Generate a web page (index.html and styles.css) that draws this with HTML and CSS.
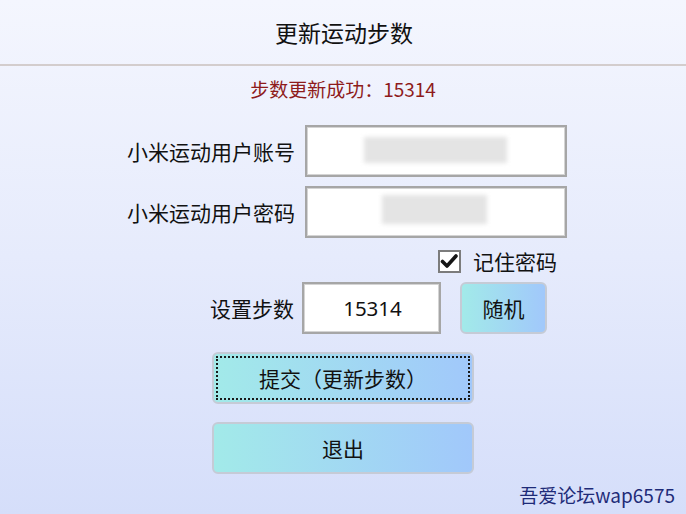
FILE: index.html
```html
<!DOCTYPE html>
<html lang="zh">
<head>
<meta charset="utf-8">
<title>更新运动步数</title>
<link rel="stylesheet" href="styles.css">
</head>
<body>
<div class="page">
  <div class="header">更新运动步数</div>
  <div class="msg">步数更新成功：15314</div>
  <div class="row row-account">
    <div class="label">小米运动用户账号</div>
    <div class="field field-wide"><div class="blur blur-a"></div></div>
  </div>
  <div class="row row-password">
    <div class="label">小米运动用户密码</div>
    <div class="field field-wide"><div class="blur blur-b"></div></div>
  </div>
  <div class="row row-remember">
    <div class="checkbox">
      <svg viewBox="0 0 19 19" width="19" height="19"><path d="M2.5 9.5 L7 14 L16 4" fill="none" stroke="#151515" stroke-width="3.6" stroke-linecap="round" stroke-linejoin="round"/></svg>
    </div>
    <div class="remember-text">记住密码</div>
  </div>
  <div class="row row-steps">
    <div class="label">设置步数</div>
    <div class="field field-steps">15314</div>
    <div class="btn btn-small">随机</div>
  </div>
  <div class="row row-btn row-submit">
    <div class="btn btn-wide"><div class="focus">提交（更新步数）</div></div>
  </div>
  <div class="row row-btn row-exit">
    <div class="btn btn-wide">退出</div>
  </div>
  <div class="footer">吾爱论坛wap6575</div>
</div>
</body>
</html>
```
FILE: styles.css
```css
html, body {
  margin: 0;
  padding: 0;
}
body {
  width: 686px;
  height: 514px;
  overflow: hidden;
  background: linear-gradient(to bottom, #f4f6fe 0%, #e6ebfc 50%, #d5defa 100%);
  font-family: "Noto Sans CJK SC", "Microsoft YaHei", sans-serif;
  color: #111;
}
.page {
  display: flex;
  flex-direction: column;
}
.header {
  height: 64px;
  border-bottom: 2px solid #d3cdcd;
  display: flex;
  align-items: center;
  justify-content: center;
  font-size: 23px;
  padding-left: 2px;
}
.msg {
  padding-top: 11px;
  line-height: 24px;
  height: 24px;
  text-align: center;
  color: #8e1b1b;
  font-size: 19px;
  padding-left: 0;
}
.row {
  display: flex;
  align-items: center;
}
.label {
  font-size: 21px;
  line-height: 24px;
  white-space: nowrap;
}
.field {
  box-sizing: border-box;
  height: 52px;
  background: #fff;
  border: 2px solid #a6a6a6;
  box-shadow: inset 0 0 0 1px #d4d4d4;
  display: flex;
  align-items: center;
  justify-content: center;
  position: relative;
}
.row-account {
  margin-top: 24px;
  padding-left: 127px;
}
.row-password {
  margin-top: 9px;
  padding-left: 127px;
}
.row-account .label, .row-password .label {
  width: 178px;
}
.field-wide {
  width: 262px;
}
.blur {
  position: absolute;
  background: #e4e4e4;
  filter: blur(2px);
}
.blur-a {
  left: 57px;
  top: 10px;
  width: 143px;
  height: 26px;
}
.blur-b {
  left: 75px;
  top: 7px;
  width: 105px;
  height: 29px;
}
.row-remember {
  margin-top: 12px;
  padding-left: 438px;
  height: 22px;
}
.checkbox {
  box-sizing: border-box;
  width: 23px;
  height: 23px;
  border: 2px solid #7c7c7c;
  background: #fff;
  display: flex;
  align-items: center;
  justify-content: center;
}
.checkbox svg {
  display: block;
  width: 19px;
  height: 19px;
}
.remember-text {
  margin-left: 12px;
  font-size: 21px;
  line-height: 24px;
}
.row-steps {
  margin-top: 10px;
  padding-left: 210px;
}
.row-steps .label {
  width: 92px;
}
.field-steps {
  width: 139px;
  font-family: "Noto Sans", "Noto Sans CJK SC", sans-serif;
  font-size: 20.5px;
  padding-left: 2px;
}
.btn {
  box-sizing: border-box;
  height: 52px;
  border: 2px solid #c5cbd6;
  border-radius: 6px;
  background: linear-gradient(to right, #a2eae9 0%, #a1c8fb 100%);
  display: flex;
  align-items: center;
  justify-content: center;
  font-size: 21px;
}
.btn-small {
  width: 87px;
  margin-left: 19px;
}
.row-btn {
  padding-left: 212px;
}
.row-submit {
  margin-top: 18px;
}
.row-exit {
  margin-top: 18px;
}
.btn-wide {
  width: 262px;
  padding: 2px;
}
.focus {
  box-sizing: border-box;
  width: 100%;
  height: 100%;
  border: 2px dotted #1a1a1a;
  display: flex;
  align-items: center;
  justify-content: center;
}
.footer {
  margin-top: 9px;
  align-self: flex-end;
  padding-right: 11px;
  line-height: 24px;
  font-size: 19px;
  color: #1e2b78;
}
```
